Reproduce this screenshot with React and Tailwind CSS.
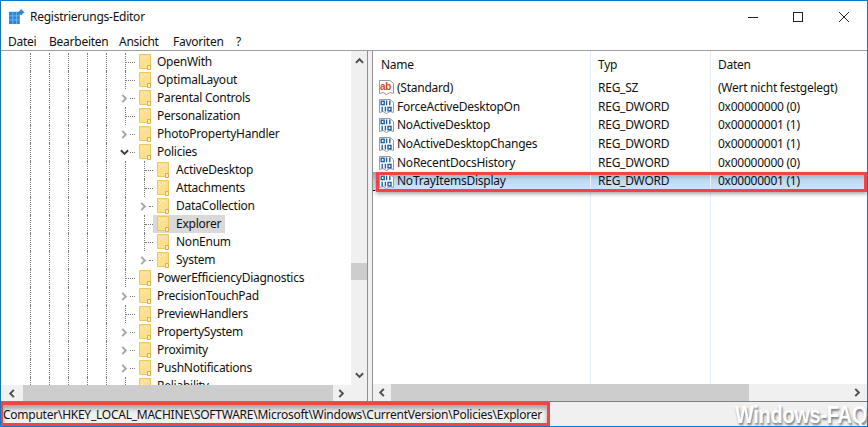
import React from 'react';

const levelA = [
    { name: 'OpenWith' },
    { name: 'OptimalLayout' },
    { name: 'Parental Controls', arrow: true },
    { name: 'Personalization' },
    { name: 'PhotoPropertyHandler', arrow: true },
    { name: 'Policies', open: true },
    { name: 'ActiveDesktop', sub: true },
    { name: 'Attachments', sub: true },
    { name: 'DataCollection', sub: true, arrow: true },
    { name: 'Explorer', sub: true, selected: true },
    { name: 'NonEnum', sub: true },
    { name: 'System', sub: true, arrow: true, last: true },
    { name: 'PowerEfficiencyDiagnostics' },
    { name: 'PrecisionTouchPad', arrow: true },
    { name: 'PreviewHandlers' },
    { name: 'PropertySystem', arrow: true },
    { name: 'Proximity', arrow: true },
    { name: 'PushNotifications', arrow: true },
    { name: 'Reliability' },
];

const values = [
    { name: '(Standard)', type: 'REG_SZ', data: '(Wert nicht festgelegt)', text: true },
    { name: 'ForceActiveDesktopOn', type: 'REG_DWORD', data: '0x00000000 (0)' },
    { name: 'NoActiveDesktop', type: 'REG_DWORD', data: '0x00000001 (1)' },
    { name: 'NoActiveDesktopChanges', type: 'REG_DWORD', data: '0x00000001 (1)' },
    { name: 'NoRecentDocsHistory', type: 'REG_DWORD', data: '0x00000000 (0)' },
    { name: 'NoTrayItemsDisplay', type: 'REG_DWORD', data: '0x00000001 (1)', marked: true },
];

const Folder = () => (
    <svg width="12" height="16" viewBox="0 0 12 16" className="shrink-0">
        <path d="M0.5 0.5H11.5V14.5H0.5Z" fill="#fde08f" stroke="#f0c75e" />
        <path d="M8.5 15.5V11.5H11.5V15.5Z" fill="#fff3c9" stroke="#e3ae3a" />
        <path d="M2 2h1v1H2zM5 2h1v1H5zM3 4h1v1H3zM7 3h1v1H7zM2 6h1v1H2z" fill="#fff6d8" />
    </svg>
);

const Arrow = ({ dir, color = '#505050', size = 9 }) => {
    const paths = {
        left: 'M6.5 1L2.5 5L6.5 9',
        right: 'M2.5 1L6.5 5L2.5 9',
        up: 'M1 6.5L5 2.5L9 6.5',
        down: 'M1 2.5L5 6.5L9 2.5',
    };
    return (
        <svg width={size} height={size} viewBox="0 0 10 10" className="shrink-0">
            <path d={paths[dir]} fill="none" stroke={color} strokeWidth="2.2" />
        </svg>
    );
};

const Guide = () => (
    <div className="w-[19px] h-full shrink-0">
        <div className="border-l border-dotted border-[#777] h-full" />
    </div>
);

const Connector = ({ item, width }) => {
    if (item.arrow || item.open) {
        return (
            <div className={`${width} h-full shrink-0 flex items-center -ml-[5px] pl-0`}>
                {item.open ? <Arrow dir="down" color="#404040" /> : <Arrow dir="right" color="#a8a8a8" />}
                <div className="ml-[1px] flex-1 border-b border-dotted border-[#777]" />
            </div>
        );
    }
    return (
        <div className={`${width} h-full shrink-0 flex items-center border-l border-dotted border-[#777]`}>
            <div className="w-full border-b border-dotted border-[#777]" />
        </div>
    );
};

const TreeRow = ({ item }) => (
    <div className="h-[18px] flex items-center shrink-0">
        {[0, 1, 2, 3, 4].map((i) => <Guide key={i} />)}
        {item.sub ? (
            <>
                <Guide />
                <Connector item={item} width={item.arrow ? 'w-[14px]' : 'w-[9px]'} />
            </>
        ) : (
            <Connector item={item} width={item.arrow || item.open ? 'w-[15px]' : 'w-[10px]'} />
        )}
        <div className={`h-full flex items-center pl-[4px] pr-[4px] ${item.selected ? 'bg-[#d9d9d9]' : ''}`}>
            <Folder />
            <span className={item.sub ? 'ml-[7px]' : 'ml-[6px]'}>{item.name}</span>
        </div>
    </div>
);

const RegIcon = ({ text }) => (
    <svg width="17" height="17" viewBox="0 0 17 17" className="shrink-0">
        <path d="M1.5 1.5H12L15.5 4.5V14.5L12 13.5L8.5 15.5L5 13.5L1.5 14.5Z" fill="#fff" stroke="#9a9a9a" />
        {text ? (
            <text x="2" y="11" fontSize="10" fontWeight="700" fill="#e0462a" fontFamily="Liberation Sans, sans-serif">ab</text>
        ) : (
            <g fill="none" stroke="#1d5fa8" strokeWidth="1.4">
                <rect x="3.2" y="3.2" width="3" height="3.4" />
                <path d="M8.6 2.6v4.6M11.8 2.6v4.6" />
                <path d="M4.2 8.8v4.6M7.4 8.8v4.6" />
                <rect x="10" y="9.4" width="3" height="3.4" />
            </g>
        )}
    </svg>
);

const Cols = ({ a, b, c, className = '' }) => (
    <div className={`flex ${className}`}>
        <div className="w-[218px] shrink-0 h-full flex items-center border-r border-[#e6eef6]">{a}</div>
        <div className="w-[120px] shrink-0 h-full flex items-center border-r border-[#e6eef6] pl-[7px]">{b}</div>
        <div className="flex-1 h-full flex items-center pl-[7px]">{c}</div>
    </div>
);

export default function App() {
    return (
        <div className="relative w-[868px] h-[427px] overflow-hidden border border-[#0078d7] bg-[#f0f0f0] flex flex-col text-[12px] tracking-[-0.25px] text-[#111] font-['Noto_Sans',sans-serif] leading-none">
            <div className="h-[31px] shrink-0 bg-white flex items-center">
                <svg width="16" height="16" viewBox="0 0 17 17" className="ml-[8px] mr-[1px] shrink-0">
                    <rect x="0" y="3" width="11.5" height="13" fill="#2b88d8" />
                    <path d="M4 3v13M8 3v13M0 7.3h11.5M0 11.6h11.5" stroke="#7fbdf0" strokeWidth="0.8" />
                    <path d="M13 0.5L16 3.5L13 6.5L10 3.5Z" fill="#2b88d8" stroke="#1b6cb5" strokeWidth="0.5" />
                </svg>
                <span className="ml-[4px]">Registrierungs-Editor</span>
                <div className="ml-auto flex items-center h-full">
                    <svg width="10" height="10" viewBox="0 0 10 10" className="mr-[35px]"><path d="M0 5.5H10" stroke="#222" /></svg>
                    <svg width="10" height="10" viewBox="0 0 10 10" className="mr-[36px]"><rect x="0.5" y="0.5" width="9" height="9" fill="none" stroke="#222" /></svg>
                    <svg width="10" height="10" viewBox="0 0 10 10" className="mr-[18px]"><path d="M0 0L10 10M10 0L0 10" stroke="#222" /></svg>
                </div>
            </div>

            <div className="h-[18px] shrink-0 bg-white flex items-center pl-[7px] pt-[1px]">
                <span className="w-[41px]">Datei</span>
                <span className="w-[70px]">Bearbeiten</span>
                <span className="w-[54px]">Ansicht</span>
                <span className="w-[63px]">Favoriten</span>
                <span>?</span>
            </div>

            <div className="h-[352px] shrink-0 flex border-y border-[#a0a0a0] border-b-[#808080]">
                <div className="w-[367px] shrink-0 flex flex-col bg-white border-r border-[#909090]">
                    <div className="h-[334px] shrink-0 flex">
                        <div className="flex-1 overflow-hidden pl-[29px] pt-[2px] flex flex-col">
                            {levelA.map((item) => <TreeRow key={item.name} item={item} />)}
                        </div>
                        <div className="w-[16px] shrink-0 bg-[#f0f0f0] flex flex-col items-center">
                            <div className="h-[20px] flex items-center justify-center"><Arrow dir="up" /></div>
                            <div className="h-[192px]" />
                            <div className="h-[17px] w-full bg-[#cdcdcd]" />
                            <div className="flex-1" />
                            <div className="h-[20px] flex items-center justify-center"><Arrow dir="down" /></div>
                        </div>
                    </div>
                    <div className="flex-1 bg-[#f0f0f0] flex items-center">
                        <div className="w-[22px] flex justify-center"><Arrow dir="left" /></div>
                        <div className="w-[310px] h-full bg-[#cdcdcd]" />
                        <div className="w-[17px] flex justify-center"><Arrow dir="right" /></div>
                    </div>
                </div>

                <div className="w-[4px] shrink-0 bg-[#f0f0f0]" />

                <div className="flex-1 flex flex-col bg-white border-l border-[#909090]">
                    <Cols className="h-[27.5px] shrink-0" a={<span className="pl-[8px]">Name</span>} b="Typ" c="Daten" />
                    {values.map((row) => (
                        <Cols
                            key={row.name}
                            className={`h-[18.8px] shrink-0 ${row.marked ? 'bg-gradient-to-b from-[#8fa6b8] via-[#bcd9f0] via-45% to-[#cce8ff] border-b border-dotted border-black' : ''}`}
                            a={<div className="flex items-center pl-[5px] gap-[2px]"><RegIcon text={row.text} /><span>{row.name}</span></div>}
                            b={row.type}
                            c={row.data}
                        />
                    ))}
                    <Cols className="flex-1" />
                    <div className="h-[17px] shrink-0 bg-[#f0f0f0] flex items-center">
                        <div className="w-[18px] flex justify-center"><Arrow dir="left" /></div>
                        <div className="w-[358px] h-full bg-[#cdcdcd]" />
                        <div className="flex-1 flex justify-end pr-[5px]"><Arrow dir="right" /></div>
                    </div>
                </div>
            </div>

            <div className="flex-1 flex items-center pl-[2px] pt-[2px] bg-[#f0f0f0]">
                Computer\HKEY_LOCAL_MACHINE\SOFTWARE\Microsoft\Windows\CurrentVersion\Policies\Explorer
            </div>

            {/* red markers from the article */}
            <div className="absolute left-[375px] top-[171px] w-[491px] h-[20px] border-[3px] border-[#f04545] shadow-[0_2px_4px_rgba(0,0,0,0.35)]" />
            <div className="absolute -left-[1px] top-[401px] w-[550px] h-[24px] border-[3px] border-[#f04545] shadow-[inset_0_4px_4px_rgba(0,0,0,0.3)]" />

            <div className="absolute right-0 top-[406px] origin-bottom scale-y-[1.2] text-[20px] font-bold tracking-[-0.3px] text-white font-['Liberation_Sans',sans-serif] [text-shadow:1px_1px_2px_#777]">Windows-FAQ</div>
        </div>
    );
}
